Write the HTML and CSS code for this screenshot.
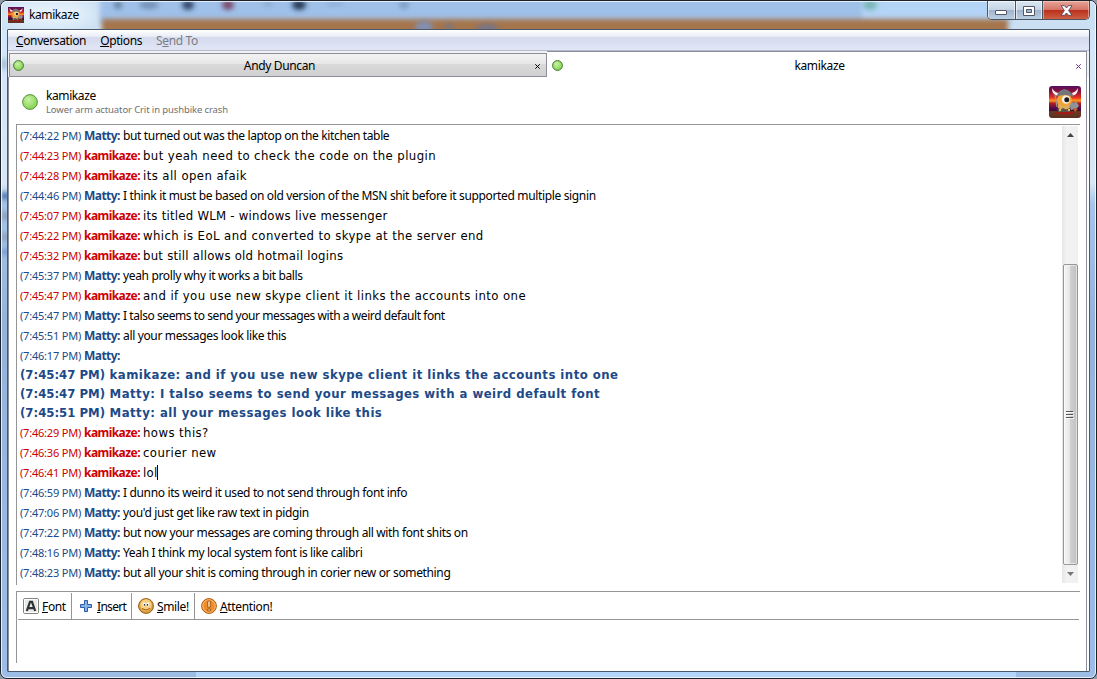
FILE: index.html
```
<!DOCTYPE html>
<html lang="en">
<head>
    <meta charset="UTF-8">
    <meta name="viewport" content="width=device-width, initial-scale=1.0">
    <title>kamikaze</title>
    <link rel="stylesheet" href="styles.css">
</head>
<body>
    <svg width="0" height="0" class="defs">
        <defs>
            <radialGradient id="greenFill" cx="40%" cy="35%" r="70%">
                <stop offset="0" stop-color="#c9f2ac"/>
                <stop offset="0.6" stop-color="#9ade6c"/>
                <stop offset="1" stop-color="#86cf55"/>
            </radialGradient>
            <symbol id="avatar" viewBox="0 0 32 32">
                <linearGradient id="sky" x1="0" y1="0" x2="0" y2="1">
                    <stop offset="0" stop-color="#53105e"/>
                    <stop offset="0.18" stop-color="#8e1038"/>
                    <stop offset="0.36" stop-color="#e8331c"/>
                    <stop offset="0.46" stop-color="#f99a22"/>
                    <stop offset="0.54" stop-color="#b41a24"/>
                    <stop offset="0.7" stop-color="#4d0a4e"/>
                    <stop offset="0.78" stop-color="#3c1030"/>
                    <stop offset="0.8" stop-color="#6b3a24"/>
                    <stop offset="1" stop-color="#5c3020"/>
                </linearGradient>
                <rect width="32" height="32" fill="url(#sky)"/>
                <ellipse cx="16" cy="27" rx="9" ry="1.600" fill="#a31a14"/>
                <ellipse cx="15.500" cy="15" rx="7.500" ry="8" fill="#f2a233"/>
                <path d="M9 18q6 4 12 0v4q-6 4-12 0z" fill="#dcae5c"/>
                <circle cx="17" cy="13.500" r="4.200" fill="#f4efe6"/>
                <circle cx="17.800" cy="13.800" r="2.500" fill="#17171c"/>
                <path d="M7 11q1-6 8.500-8q7.500 2 9 8q-9-4-17.500 0z" fill="#73757b"/>
                <path d="M8 9.500Q3 9 3 2q2 4 6 5zM24 9.500q5-.5 5-7.500q-2 4-6 5z" fill="#f6eef0"/>
                <path d="M20 20l3-4 2 1 2-2 3 5-3 3-5 1z" fill="#8f9299"/>
                <path d="M6 9l2 12" stroke="#9a9296" stroke-width="1.300"/>
                <path d="M8 21l3 3 3-2 4 2 4-3-2 5H9z" fill="#57524c"/>
                <path d="M24 22l5 1-3 3z" fill="#d05a20"/>
                <circle cx="11" cy="24" r="1.200" fill="#e9bd63"/>
                <circle cx="20" cy="24" r="1.200" fill="#e9bd63"/>
            </symbol>
            <symbol id="close" viewBox="0 0 5 5">
                <path d="M.3.3l4.400 4.400M4.700.3L.3 4.700" stroke="currentColor" stroke-width="1"/>
            </symbol>
        </defs>
    </svg>

    <div class="window">
        <svg class="glass" viewBox="0 0 1097 679" width="1097" height="679">
            <defs>
                <filter id="soft" x="-20%" y="-60%" width="140%" height="220%"><feGaussianBlur stdDeviation="2.500"/></filter>
                <filter id="softer" x="-50%" y="-50%" width="200%" height="200%"><feGaussianBlur stdDeviation="8"/></filter>
                <linearGradient id="side" x1="0" y1="0" x2="0" y2="1">
                    <stop offset="0" stop-color="#d2e6fa"/>
                    <stop offset="0.27" stop-color="#d8e6f6"/>
                    <stop offset="0.3" stop-color="#a6c5ea"/>
                    <stop offset="0.48" stop-color="#94b3db"/>
                    <stop offset="1" stop-color="#9bbde6"/>
                </linearGradient>
            </defs>
            <rect width="1097" height="679" fill="url(#side)"/>
            <rect width="1097" height="30" fill="#cbe0f2"/>
            <ellipse cx="50" cy="14" rx="45" ry="14" fill="#e6f2fd" filter="url(#softer)"/>
            <rect x="100" y="-6" width="770" height="30" fill="#9fc0e9" filter="url(#soft)"/>
            <rect x="862" y="-6" width="150" height="30" fill="#b3d4f6" filter="url(#soft)"/>
            <rect x="102" y="19" width="906" height="22" fill="#a5744b" filter="url(#soft)"/>
            <g filter="url(#soft)">
                <ellipse cx="118" cy="5" rx="4" ry="4" fill="#64809f"/>
                <ellipse cx="149" cy="5" rx="10" ry="4" fill="#7591b3"/>
                <ellipse cx="188" cy="5" rx="6" ry="5" fill="#34496a"/>
                <ellipse cx="228" cy="5" rx="6" ry="5" fill="#7c486b"/>
                <ellipse cx="268" cy="4" rx="5" ry="3" fill="#8eabd0"/>
                <ellipse cx="299" cy="5" rx="7" ry="5" fill="#263a57"/>
                <ellipse cx="335" cy="4" rx="9" ry="2" fill="#8dabd2"/>
                <ellipse cx="404" cy="5" rx="5" ry="4" fill="#7f9cc2"/>
                <ellipse cx="424" cy="27" rx="9" ry="6" fill="#8190b5"/>
                <ellipse cx="449" cy="27" rx="5" ry="3" fill="#75758a"/>
                <ellipse cx="487" cy="28" rx="11" ry="4" fill="#75758a"/>
                <ellipse cx="870" cy="5" rx="7" ry="5" fill="#78b5b5"/>
                <ellipse cx="5" cy="196" rx="4" ry="4" fill="#3f6da8"/>
                <ellipse cx="5" cy="216" rx="4" ry="5" fill="#8d9fb6"/>
                <ellipse cx="5" cy="237" rx="4" ry="4" fill="#8d9fb6"/>
                <ellipse cx="5" cy="252" rx="4" ry="3" fill="#6d93c6"/>
                <ellipse cx="4" cy="64" rx="4" ry="6" fill="#a6bfd8"/>
            </g>
            <rect x="196" y="672" width="820" height="7" fill="#b4d6fb"/>
        </svg>

        <div class="titleBar">
            <svg class="titleIcon" width="16" height="16"><use href="#avatar"/></svg>
            <span class="titleText">kamikaze</span>
            <div class="windowButtons">
                <div class="winButton minimize">
                    <svg width="13" height="6"><rect x="0.500" y="0.500" width="11" height="4" rx="0.500" fill="#fff" stroke="#535666"/></svg>
                </div>
                <div class="winButton maximize">
                    <svg width="12" height="10"><path d="M.5.5h11v9H.5z" fill="#fff" stroke="#535666"/><path d="M3.500 3.500h5v3h-5z" fill="#9db9d8" stroke="#535666"/></svg>
                </div>
                <div class="winButton closeButton">
                    <svg width="13" height="11" viewBox="0 0 13 11"><path d="M1 .7h3.500l2 2.300 2-2.300H12L8.600 5.500 12 10.300H8.500l-2-2.300-2 2.300H1l3.400-4.800z" fill="#fff" stroke="#4f4a5c" stroke-width="0.900"/></svg>
                </div>
            </div>
        </div>

        <div class="client">
            <div class="menuBar">
                <span><u>C</u>onversation</span>
                <span><u>O</u>ptions</span>
                <span class="disabled">S<u>e</u>nd To</span>
            </div>

            <div class="tabs">
                <div class="tab">
                    <svg width="11" height="11"><circle cx="5.500" cy="5.500" r="4.900" fill="url(#greenFill)" stroke="#43782a"/></svg>
                    <span class="tabName">Andy Duncan</span>
                    <svg class="tabClose" width="5" height="5"><use href="#close"/></svg>
                </div>
                <div class="tab active">
                    <svg width="11" height="11"><circle cx="5.500" cy="5.500" r="4.900" fill="url(#greenFill)" stroke="#43782a"/></svg>
                    <span class="tabName">kamikaze</span>
                    <svg class="tabClose" width="5" height="5"><use href="#close"/></svg>
                </div>
            </div>

            <div class="page">
                <div class="buddy">
                    <svg width="16" height="16"><circle cx="8" cy="8" r="7.400" fill="url(#greenFill)" stroke="#57933a"/></svg>
                    <div class="buddyInfo">
                        <div class="buddyName">kamikaze</div>
                        <div class="buddyStatus">Lower arm actuator Crit in pushbike crash</div>
                    </div>
                    <svg class="buddyIcon" width="32" height="32"><use href="#avatar"/></svg>
                </div>

                <div class="chat">
                    <div class="messages">
                        <div class="row matty"><span class="time">(7:44:22 PM)</span><b>Matty:</b><span class="msg">but turned out was the laptop on the kitchen table</span></div>
                        <div class="row kami"><span class="time">(7:44:23 PM)</span><b>kamikaze:</b><span class="msg">but yeah need to check the code on the plugin</span></div>
                        <div class="row kami"><span class="time">(7:44:28 PM)</span><b>kamikaze:</b><span class="msg">its all open afaik</span></div>
                        <div class="row matty"><span class="time">(7:44:46 PM)</span><b>Matty:</b><span class="msg">I think it must be based on old version of the MSN shit before it supported multiple signin</span></div>
                        <div class="row kami"><span class="time">(7:45:07 PM)</span><b>kamikaze:</b><span class="msg narrow">its titled WLM - windows live messenger</span></div>
                        <div class="row kami"><span class="time">(7:45:22 PM)</span><b>kamikaze:</b><span class="msg">which is EoL and converted to skype at the server end</span></div>
                        <div class="row kami"><span class="time">(7:45:32 PM)</span><b>kamikaze:</b><span class="msg narrow">but still allows old hotmail logins</span></div>
                        <div class="row matty"><span class="time">(7:45:37 PM)</span><b>Matty:</b><span class="msg">yeah prolly why it works a bit balls</span></div>
                        <div class="row kami"><span class="time">(7:45:47 PM)</span><b>kamikaze:</b><span class="msg">and if you use new skype client it links the accounts into one</span></div>
                        <div class="row matty"><span class="time">(7:45:47 PM)</span><b>Matty:</b><span class="msg narrow">I talso seems to send your messages with a weird default font</span></div>
                        <div class="row matty"><span class="time">(7:45:51 PM)</span><b>Matty:</b><span class="msg">all your messages look like this</span></div>
                        <div class="row matty"><span class="time">(7:46:17 PM)</span><b>Matty:</b></div>
                        <div class="pasted"><span>(7:45:47 PM)</span> kamikaze: and if you use new skype client it links the accounts into one</div>
                        <div class="pasted"><span>(7:45:47 PM)</span> Matty: I talso seems to send your messages with a weird default font</div>
                        <div class="pasted"><span>(7:45:51 PM)</span> Matty: all your messages look like this</div>
                        <div class="row kami"><span class="time">(7:46:29 PM)</span><b>kamikaze:</b><span class="msg">hows this?</span></div>
                        <div class="row kami"><span class="time">(7:46:36 PM)</span><b>kamikaze:</b><span class="msg">courier new</span></div>
                        <div class="row kami"><span class="time">(7:46:41 PM)</span><b>kamikaze:</b><span class="msg narrow">lol</span><i class="caret"></i></div>
                        <div class="row matty"><span class="time">(7:46:59 PM)</span><b>Matty:</b><span class="msg">I dunno its weird it used to not send through font info</span></div>
                        <div class="row matty"><span class="time">(7:47:06 PM)</span><b>Matty:</b><span class="msg">you'd just get like raw text in pidgin</span></div>
                        <div class="row matty"><span class="time">(7:47:22 PM)</span><b>Matty:</b><span class="msg">but now your messages are coming through all with font shits on</span></div>
                        <div class="row matty"><span class="time">(7:48:16 PM)</span><b>Matty:</b><span class="msg">Yeah I think my local system font is like calibri</span></div>
                        <div class="row matty"><span class="time">(7:48:23 PM)</span><b>Matty:</b><span class="msg">but all your shit is coming through in corier new or something</span></div>
                    </div>
                    <div class="scrollbar">
                        <svg class="arrow" width="7" height="4"><path d="M0 4L3.500 0 7 4z" fill="#444"/></svg>
                        <div class="thumb">
                            <svg width="8" height="8"><path d="M0 .5h7M0 3.500h7M0 6.500h7" stroke="#555"/><path d="M0 1.500h8M0 4.500h8M0 7.500h8" stroke="#fff" stroke-opacity="0.7"/></svg>
                        </div>
                        <svg class="arrow" width="7" height="4"><path d="M0 0h7L3.500 4z" fill="#777"/></svg>
                    </div>
                </div>

                <div class="entry">
                    <div class="toolbar">
                        <div class="tool toolFont">
                            <svg width="16" height="16"><rect x="0.500" y="0.500" width="15" height="15" rx="1.500" fill="#e9e9e7" stroke="#85857f"/><path d="M1.500 1.500h13v13h-13z" fill="none" stroke="#fff"/><path d="M3.800 13L7 3.800h2L12.200 13M5.500 10.200h5" fill="none" stroke="#2e3436" stroke-width="2.200"/></svg>
                            <span><u>F</u>ont</span>
                        </div>
                        <div class="tool toolInsert">
                            <svg width="14" height="14"><path d="M5.500 1.500h3v4h4v3h-4v4h-3v-4h-4v-3h4z" fill="#86b2e4" stroke="#2a5ba8"/></svg>
                            <span><u>I</u>nsert</span>
                        </div>
                        <div class="tool toolSmile">
                            <svg width="16" height="16"><circle cx="8" cy="8" r="7.400" fill="#e3a040" stroke="#8e5a10"/><circle cx="8" cy="7" r="5.700" fill="#f8cf80"/><ellipse cx="6.200" cy="6.500" rx="1.500" ry="1.900" fill="#fff"/><ellipse cx="9.800" cy="6.500" rx="1.500" ry="1.900" fill="#fff"/><circle cx="6.500" cy="6.900" r="0.800" fill="#222"/><circle cx="9.500" cy="6.900" r="0.800" fill="#222"/><path d="M4 10.500q4 3 8 0" fill="none" stroke="#9a5c14"/></svg>
                            <span><u>S</u>mile!</span>
                        </div>
                        <div class="tool toolAttention">
                            <svg width="16" height="16"><circle cx="8" cy="8" r="7.400" fill="#ee8c2c" stroke="#b05a0c"/><circle cx="8" cy="8" r="6.200" fill="none" stroke="#f9bd74"/><path d="M6.700 3h2.600v6.200H6.700zM6.700 11h2.600v2H6.700z" fill="#f7d9b0" stroke="#9c4a06" stroke-width="0.800"/></svg>
                            <span><u>A</u>ttention!</span>
                        </div>
                    </div>
                </div>
            </div>
        </div>
    </div>
</body>
</html>
```
FILE: styles.css
```
* {
    box-sizing: border-box;
}

body {
    margin: 0;
    font-family: 'Noto Sans', 'Open Sans', sans-serif;
    font-size: 12px;
    color: #000;
    background-color: #8d9aa8;
    overflow: hidden;
}

svg {
    display: block;
    flex-shrink: 0;
}

.defs {
    position: absolute;
}

.window {
    position: relative;
    width: 1097px;
    height: 679px;
    border: 1px solid #1c222c;
    border-radius: 7px;
    overflow: hidden;
    display: flex;
    flex-direction: column;
    padding: 0 6px 6px;
}

/* blurred desktop behind the frame */
.glass {
    position: absolute;
    left: -1px;
    top: -1px;
}

.window::after {
    content: '';
    position: absolute;
    left: 0;
    top: 0;
    right: 0;
    bottom: 0;
    border: 1px solid rgba(255, 255, 255, 0.75);
    border-radius: 6px;
}

.titleBar {
    position: relative;
    height: 28px;
    display: flex;
    align-items: flex-start;
    padding-left: 1px;
}

.titleIcon {
    margin-top: 6px;
}

.titleText {
    margin: 5px 0 0 5px;
    line-height: 17px;
    letter-spacing: -0.4px;
}

.windowButtons {
    display: flex;
    margin-left: auto;
    border: 1px solid #4b5361;
    border-top: none;
    border-radius: 0 0 5px 5px;
    overflow: hidden;
    height: 19px;
    z-index: 1;
}

.winButton {
    height: 19px;
    display: flex;
    align-items: center;
    justify-content: center;
    background: linear-gradient(#dbe6f2 0%, #c6d5e6 45%, #9fb4cc 48%, #bdd2e6 100%);
    box-shadow: inset 0 0 0 1px rgba(255, 255, 255, 0.6);
    border-right: 1px solid #4b5361;
}

.minimize {
    width: 28px;
    padding-top: 5px;
}

.maximize {
    width: 27px;
}

.closeButton {
    width: 46px;
    border-right: none;
    background: linear-gradient(#e5a596 0%, #d5756a 45%, #b92e1c 48%, #cf6548 100%);
    box-shadow: inset 0 0 0 1px rgba(255, 220, 210, 0.5);
}

.client {
    position: relative;
    height: 643px;
    border: 1px solid #4a5a6c;
    border-radius: 1px;
    background-color: #fff;
    display: flex;
    flex-direction: column;
}

.menuBar {
    height: 21px;
    display: flex;
    gap: 14px;
    padding: 1px 8px 0;
    line-height: 20px;
    letter-spacing: -0.38px;
    background: linear-gradient(#fff 0, #e7ebf5 7px, #d4daed 7px, #e1e7f6 20px);
    border-bottom: 1px solid #b3b8cd;
}

.disabled {
    color: #7d7d85;
}

.tabs {
    height: 26px;
    display: flex;
    align-items: flex-start;
    background-color: #f2f2f4;
    padding-right: 2px;
}

.tab {
    width: 538px;
    height: 24px;
    margin: 2px 0 0 1px;
    display: flex;
    align-items: center;
    padding: 1px 6px 0 3px;
    background: linear-gradient(#f3f3f3 0, #e6e6e6 10px, #dadada 10px, #cfcfcf 23px);
    border: 1px solid #8b8e99;
}

.tabName {
    flex: 1;
    text-align: center;
    letter-spacing: -0.35px;
}

.tabClose {
    margin-top: 2px;
}

.tab.active {
    flex: 1;
    height: 26px;
    margin: 0;
    padding: 1px 5px 0 5px;
    background: #fff;
    border-bottom: none;
    border-left: none;
}

.active .tabClose {
    color: #6d2a80;
}

.page {
    flex: 1;
    display: flex;
    flex-direction: column;
    border: 1px solid #8b8e99;
    border-top: none;
    border-bottom: none;
    margin-right: 2px;
    padding: 0 6px 0 7px;
}

.buddy {
    height: 47px;
    display: flex;
    align-items: flex-start;
    padding: 9px 0 0 6px;
}

.buddy > svg:first-child {
    margin-top: 8px;
}

.buddyInfo {
    margin: 2px auto 0 8px;
}

.buddyName {
    line-height: 15px;
    letter-spacing: -0.4px;
}

.buddyStatus {
    font-size: 9.5px;
    line-height: 14px;
    letter-spacing: -0.12px;
    color: #6f6f6f;
}

.buddyIcon {
    border-radius: 3px;
    margin-right: -1px;
}

.chat {
    height: 461px;
    display: flex;
    justify-content: space-between;
    border-top: 1px solid #959595;
    border-left: 1px solid #959595;
    padding: 1px 2px 0 3px;
}

.row {
    height: 20px;
    line-height: 20px;
    white-space: pre;
    display: flex;
}

.time {
    width: 64px;
    font-size: 11px;
    letter-spacing: -0.2px;
}

.row b {
    width: 39px;
    letter-spacing: -0.55px;
}

.matty {
    color: #204a87;
}

.kami {
    color: #cc0000;
}

.kami b {
    width: 59px;
}

.msg {
    color: #000;
    letter-spacing: -0.35px;
}

.msg.narrow {
    letter-spacing: -0.43px;
}

.kami .msg {
    font-family: 'DejaVu Sans Condensed', 'DejaVu Sans', sans-serif;
    font-stretch: condensed;
    font-size: 13px;
    letter-spacing: 0.42px;
}

.kami .msg.narrow {
    letter-spacing: 0.25px;
}

.pasted {
    height: 19px;
    line-height: 18px;
    font-family: 'DejaVu Sans Condensed', 'DejaVu Sans', sans-serif;
    font-stretch: condensed;
    font-size: 13px;
    font-weight: bold;
    letter-spacing: 0.47px;
    color: #204a87;
    white-space: pre;
}

.pasted span {
    letter-spacing: 0;
}

.caret {
    width: 1px;
    height: 15px;
    margin-top: 2px;
    background-color: #000;
}

.scrollbar {
    width: 16px;
    height: 457px;
    display: flex;
    flex-direction: column;
    align-items: center;
    background: linear-gradient(to right, #e6e6e6, #f2f2f2 30%, #f0f0f0);
}

.arrow {
    margin-top: 7px;
}

.thumb {
    width: 15px;
    height: 301px;
    margin-top: 127px;
    display: flex;
    align-items: center;
    justify-content: center;
    border: 1px solid #979797;
    border-radius: 2px;
    background: linear-gradient(to right, #f5f5f5 0, #e6e6e6 45%, #cfcfd1 50%, #c0c0c4 100%);
    box-shadow: inset 0 0 0 1px rgba(255, 255, 255, 0.5);
}

.entry {
    height: 72px;
    margin-top: 6px;
    border-top: 1px solid #959595;
    border-left: 1px solid #959595;
    padding: 1px 1px 0 1px;
}

.toolbar {
    height: 27px;
    display: flex;
    border-bottom: 1px solid #959595;
}

.tool {
    display: flex;
    align-items: center;
    border-right: 1px solid #959595;
    letter-spacing: -0.35px;
}

.toolFont {
    width: 54px;
    padding-left: 5px;
    gap: 3px;
}

.toolInsert {
    width: 60px;
    padding-left: 7px;
    gap: 4px;
    letter-spacing: -0.7px;
}

.toolSmile {
    width: 63px;
    padding-left: 6px;
    gap: 3px;
}

.toolAttention {
    padding-left: 6px;
    gap: 3px;
    border-right: none;
}
```
